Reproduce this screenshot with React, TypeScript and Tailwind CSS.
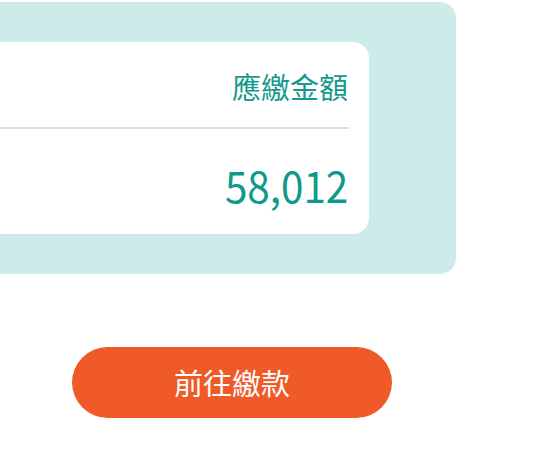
export default function App() {
  return (
    <div className="w-[544px] h-[470px] overflow-hidden bg-white font-['Noto_Sans_CJK_TC',sans-serif]">
      <div className="mt-[2px] ml-[-144px] w-[600px] h-[272px] rounded-[16px] bg-[#cdebe8] pt-[40px] pr-[87px] pb-[40px]">
        <div className="h-[192px] rounded-[16px] bg-white pr-[21px] flex flex-col">
          <div className="pt-[30px] text-right text-[29px] leading-[29px] text-[#15998c]">應繳金額</div>
          <div className="mt-[26px] mr-[-1px] h-[2px] bg-[#dedede]" />
          <div className="mt-[34px] text-right text-[43px] leading-[43px] text-[#0e9a8b]">
            <span className="inline-block origin-right scale-x-[0.94]">58,012</span>
          </div>
        </div>
      </div>
      <button
        type="button"
        className="mt-[73px] ml-[72px] w-[320px] h-[71px] rounded-full bg-[#f05a28] text-white text-[29px] leading-none flex items-center justify-center"
      >
        前往繳款
      </button>
    </div>
  );
}
